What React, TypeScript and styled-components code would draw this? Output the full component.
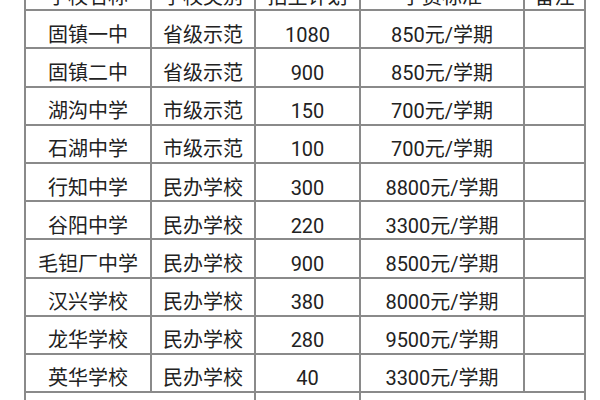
import styled, { createGlobalStyle } from 'styled-components'

const GlobalStyle = createGlobalStyle`
  html, body {
    margin: 0;
    padding: 0;
    background: #ffffff;
    overflow: hidden;
  }
  body {
    font-family: Roboto, "Noto Sans CJK SC", "Noto Sans", sans-serif;
    color: #222222;
  }
`

const Page = styled.div`
  width: 600px;
  height: 400px;
  overflow: hidden;
  background: #fff;
`

const Table = styled.table`
  margin-top: -29px;
  margin-left: 24px;
  width: 560px;
  border-collapse: collapse;
  table-layout: fixed;
  font-size: 20px;
`

const Row = styled.tr`
  height: 38.2px;
`

const Cell = styled.td`
  border: 2px solid #8a8a8a;
  padding: 11px 0 0 0;
  text-align: center;
  vertical-align: middle;
  line-height: 24px;
  white-space: nowrap;
  overflow: hidden;
`

const HeadCell = styled(Cell).attrs({ as: 'th' })`
  font-weight: 400;
`

const schools = [
  ['固镇一中', '省级示范', '1080', '850元/学期'],
  ['固镇二中', '省级示范', '900', '850元/学期'],
  ['湖沟中学', '市级示范', '150', '700元/学期'],
  ['石湖中学', '市级示范', '100', '700元/学期'],
  ['行知中学', '民办学校', '300', '8800元/学期'],
  ['谷阳中学', '民办学校', '220', '3300元/学期'],
  ['毛钽厂中学', '民办学校', '900', '8500元/学期'],
  ['汉兴学校', '民办学校', '380', '8000元/学期'],
  ['龙华学校', '民办学校', '280', '9500元/学期'],
  ['英华学校', '民办学校', '40', '3300元/学期'],
]

export default function App() {
  return (
    <Page>
      <GlobalStyle />
      <Table>
        <colgroup>
          <col style={{ width: 126 }} />
          <col style={{ width: 104 }} />
          <col style={{ width: 105 }} />
          <col style={{ width: 164 }} />
          <col style={{ width: 61 }} />
        </colgroup>
        <thead>
          <Row>
            <HeadCell>学校名称</HeadCell>
            <HeadCell>学校类别</HeadCell>
            <HeadCell>招生计划</HeadCell>
            <HeadCell>学费标准</HeadCell>
            <HeadCell>备注</HeadCell>
          </Row>
        </thead>
        <tbody>
          {schools.map((s) => (
            <Row key={s[0]}>
              <Cell>{s[0]}</Cell>
              <Cell>{s[1]}</Cell>
              <Cell>{s[2]}</Cell>
              <Cell>{s[3]}</Cell>
              <Cell></Cell>
            </Row>
          ))}
          <Row>
            <Cell colSpan={2}></Cell>
            <Cell></Cell>
            <Cell colSpan={2}></Cell>
          </Row>
        </tbody>
      </Table>
    </Page>
  )
}
